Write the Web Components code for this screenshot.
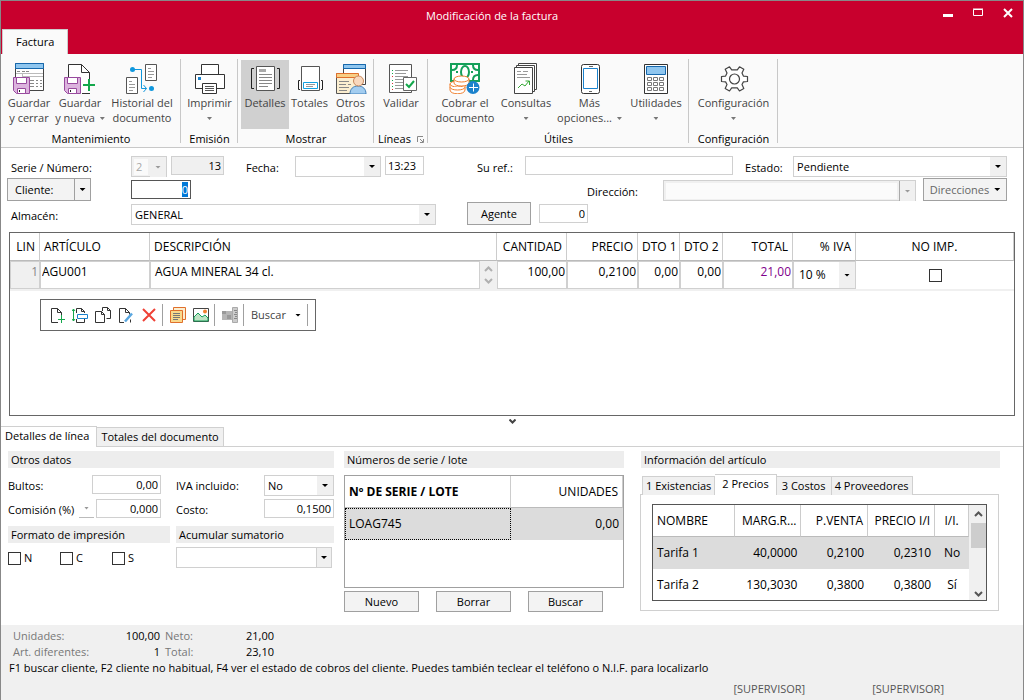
<!DOCTYPE html>
<html lang="es">
<head>
<meta charset="utf-8">
<title>Modificación de la factura</title>
<style>
  html, body { margin: 0; height: 100%; }
  body { font: 11px/16px "Open Sans", "Noto Sans", sans-serif; color: #000; background: #fff; }
</style>
</head>
<body>
<app-window></app-window>

<script>
const BASE = `
  * { box-sizing: border-box; }
  :host { display: block; box-sizing: border-box; }
  input, select, button, textarea { font: inherit; color: inherit; margin: 0; border-radius: 0; outline: none; }
  svg { display: block; flex: none; }
  button { display: inline-flex; align-items: center; justify-content: center; padding: 0; white-space: nowrap;
    height: 23px; border: 1px solid #a0a0a0; background: #f3f3f3; }
  input[type=text] { height: 19px; min-width: 0; border: 1px solid #d0d0d0; background: #fff; padding: 0 2px; }
  input.num { text-align: right; }
  input[type=checkbox] { appearance: none; width: 13px; height: 13px; border: 1px solid #333; background: #fff; flex: none; }
  .arrow { width: 5px; height: 3px; background: currentColor; clip-path: polygon(0 0, 100% 0, 50% 100%); flex: none; }
  .combo { display: inline-grid; grid-template-columns: 1fr 16px; height: 21px; border: 1px solid #d0d0d0; background: #fff; min-width: 0; }
  .combo select { grid-area: 1 / 1 / 2 / 3; appearance: none; border: 0; background: none; padding: 1px 3px 0; min-width: 0; width: 100%; }
  .combo i { grid-area: 1 / 2; background: #f0f0f0; display: grid; place-items: center; pointer-events: none; }
  .combo i::after { content: ""; width: 6px; height: 3px; background: currentColor; clip-path: polygon(0 0, 100% 0, 50% 100%); }
  .bar { background: #ededed; height: 17px; line-height: 18px; padding: 0 3px; margin: 0; font-weight: normal; font-size: inherit; }
  table { border-collapse: separate; border-spacing: 0; table-layout: fixed; width: 100%; font-size: 12px; }
  th { font-weight: normal; }
  th, td { text-align: left; padding: 0 4px; white-space: nowrap; overflow: hidden; }
  .r { text-align: right; }
  .c { text-align: center; }
`;
function define(name, css, html, ready) {
  const t = document.createElement('template');
  t.innerHTML = `<style>${BASE}${css}</style>${html}`;
  customElements.define(name, class extends HTMLElement {
    constructor() {
      super();
      this.attachShadow({ mode: 'open' }).append(t.content.cloneNode(true));
    }
    connectedCallback() { if (ready) ready(this); }
  });
}

const ICONS = {
  saveClose: `<path d="M2.5 1.5h28v27h-28z" fill="#fff" stroke="#444"/><path d="M2.5 1.5h28v5h-28z" fill="#8fc6ef" stroke="#1668ad"/>
    <path d="M4 9.5h3m2 0h3m1 0h3M17 18.500h4m2 0h2m2 0h2M17 21.500h4m2 0h2m2 0h2M17 24.500h4m2 0h2m2 0h2" stroke="#888"/><path d="M3 11.500h27M9.500 12v4M9 14.500h21" stroke="#bbb"/>
    <path d="M.5 15.500h16v16h-13l-3-3z" fill="#dcb3de" stroke="#984a9e"/><path d="M3.500 15.500h10v6h-10zM4.500 26.500h8v5h-8z" fill="#fff" stroke="#984a9e"/><path d="M6.500 28v2" stroke="#222"/>`,
  saveNew: `<path d="M4.500 31V2.500h13l8 8V31" fill="#fff"/><path d="M4.500 15V2.500h13l8 8V18M17.500 2.500v8h8M18 31.500h8" fill="none" stroke="#333"/>
    <path d="M.5 15.500h16v16h-13l-3-3z" fill="#dcb3de" stroke="#984a9e"/><path d="M3.500 15.500h10v6h-10zM4.500 26.500h8v5h-8z" fill="#fff" stroke="#984a9e"/><path d="M6.500 28v2" stroke="#222"/>
    <path d="M25 17v12M19 23h12" stroke="#14a84c" stroke-width="2"/>`,
  history: `<g fill="#fff" stroke="#555"><path d="M19.500 2.500h11v16h-11zM.5 15.500h11v16H.5z"/></g>
    <path d="M22 6.500h3M22 9.500h6M22 12.500h6M22 15.500h4M3 19.500h3M3 22.500h6M3 25.500h6M3 28.500h4" stroke="#999"/>
    <path d="M6 7.500h9.500v19h5" fill="none" stroke="#0f97dd"/><path d="M17.500 23l3 3.500-3 3.500" fill="none" stroke="#0f97dd"/><circle cx="6.500" cy="7.500" r="2.500" fill="#0f97dd"/><circle cx="25.500" cy="26.500" r="2.500" fill="#0f97dd"/>`,
  print: `<path d="M7.500 12V2.500h17V12" fill="#fff" stroke="#333"/><path d="M1.500 12.500h29v14h-29z" fill="#fff" stroke="#333"/>
    <path d="M8.500 21.500h14v10h-14z" fill="#fff" stroke="#333"/><path d="M11 24.500h9M11 26.500h9M11 28.500h9" stroke="#555"/><path d="M4 15h3v3H4z" fill="#1b82cc"/>`,
  details: `<path d="M7.500 4.500h18v24h-18z" fill="#fff" stroke="#555"/><path d="M10 7h7v3h-7z" fill="#aaa"/>
    <path d="M10 12.500h13M10 15.500h13M10 18.500h13M10 21.500h13M10 24.500h9" stroke="#888"/><path d="M5 6.500H2.500v20H5M28 6.500h2.500v20H28" fill="none" stroke="#222"/>`,
  totals: `<path d="M7.500 4.500h18v24h-18z" fill="#fff" stroke="#555"/><path d="M9.500 20.500h14v6h-14z" fill="#fff" stroke="#12a0e0"/><path d="M12 22.500h9M12 24.500h7" stroke="#999"/>
    <path d="M6 18.500H4.500v9H6M27 18.500h1.500v9H27" fill="none" stroke="#222"/>`,
  other: `<path d="M8.500 2.500h22v20h-22z" fill="#fff" stroke="#444"/><path d="M8.500 2.500h22v4h-22z" fill="#8fc6ef" stroke="#1668ad"/>
    <path d="M1.500 11.500h21v20h-21z" fill="#fbeed0" stroke="#555"/><path d="M1.500 11.500h22v4h-22z" fill="#f8cf85" stroke="#e0702c"/>
    <path d="M4 19.500h10M4 22.500h7m2 0h3M4 25.500h10M4 28.500h8" stroke="#888"/>
    <path d="M15 32c0-5 3-8 8-8s8 3 8 8z" fill="#a3cdf0" stroke="#3f7fb8"/><circle cx="23.500" cy="19" r="5" fill="#f9d8bd" stroke="#c9885c"/>`,
  check: `<path d="M4.500 2.500h22v28h-22z" fill="#fff" stroke="#555"/><path d="M10 8.500h13M10 11.500h11M10 14.500h13M10 17.500h8M10 20.500h8M10 23.500h8M10 26.500h8" stroke="#999"/>
    <path d="M7.500 8v1m0 2v1m0 6v1m0 5v1" stroke="#14a84c"/><path d="M7.500 14v1m0 6v1m0 5v1" stroke="#d33"/><path d="M18.500 15.500h13v13h-13z" fill="#fff" stroke="#666"/><path d="M21 22l3 3 5-6" fill="none" stroke="#14a84c" stroke-width="2"/>`,
  cash: `<path d="M2 2h28v17H2z" fill="#fff" stroke="#14a05a" stroke-width="2"/><path d="M3 8c3 0 5-2 5-5m16 0c0 3 2 5 5 5M24 18c0-3 2-5 5-5" fill="none" stroke="#14a05a" stroke-width="2"/>
    <ellipse cx="16" cy="10" rx="4" ry="6" fill="#fff" stroke="#14a05a" stroke-width="2"/><path d="M7 10h2m13 0h2" stroke="#14a05a" stroke-width="2"/>
    <g fill="#fff" stroke="#f08030"><path d="M1 22v6c0 5 15 5 15 0v-6z"/><ellipse cx="8.500" cy="22" rx="7.500" ry="3"/><path d="M1 25c0 4 15 4 15 0"/><path d="M5 17v4c0 4 15 4 15 0v-4z"/><ellipse cx="12.500" cy="17" rx="7.500" ry="3"/></g>
    <circle cx="24" cy="25.500" r="6.500" fill="#1b82cc"/><path d="M24.500 21.500v8M20 25.500h9" stroke="#fff"/>`,
  reports: `<g fill="#fff" stroke="#444"><path d="M8.500 1.500h18v26h-18z"/><path d="M6.500 3.500h18v26h-18z"/><path d="M4.500 5.500h18v26h-18z"/></g>
    <path d="M7 9.500h4m2 0h5M7 12.500h10M7 15.500h13" stroke="#999"/><path d="M8 26l4-4 3 2 4-5m-3.500 0h4v4" fill="none" stroke="#35a835"/>`,
  phone: `<rect x="7.500" y="2.500" width="18" height="29" rx="2" fill="#fff" stroke="#333"/><path d="M9.500 6.500h14v20h-14z" fill="#fff" stroke="#1b82cc"/><path d="M15 4.500h4M15 29.500h3" stroke="#666"/>`,
  calc: `<path d="M4.500 2.500h23v29h-23z" fill="#fff" stroke="#333"/><path d="M6.500 4.500h19v8h-19z" fill="#8fc6ef" stroke="#1668ad"/>
    <path d="M7.500 15.500h4v3h-4zm6 0h4v3h-4zm6 0h4v3h-4zm-12 5h4v3h-4zm6 0h4v3h-4zm6 0h4v3h-4zm-12 5h4v3h-4zm6 0h4v3h-4zm6 0h4v3h-4z" fill="#fff" stroke="#777"/>`,
  gear: `<path d="M29.500 19.500L29.500 14.500L25.400 14.100L24 11L25.800 7.300L21.500 4.800L19.300 7.900H13.700L11.500 4.800L7.200 7.300L9 11L7.600 14.100L3.500 14.500V19.500L7.600 19.900L9 22.500L7.200 26.500L11.500 29L13.700 25.900H19.300L21.500 29L25.800 26.500L24 22.500L25.400 19.900Z" fill="#fff" stroke="#444" stroke-width="1.200" stroke-linejoin="round"/><circle cx="16.500" cy="17" r="5" fill="none" stroke="#444" stroke-width="1.200"/>`
};
const TOOLS = {
  'Nueva línea': `<path d="M9 15.500H2.500v-14h6l4 4v3M8.500 1.500v4h4" fill="none" stroke="#333"/><path d="M12.500 8v8M9 12.500h7" stroke="#14a84c"/>`,
  'Insertar línea': `<path d="M4.500 6V1.500h5l3 3V6M9.500 1.500v3h3M4.500 12v3.500h8V12" fill="none" stroke="#333"/><path d="M5.500 7.500h10v4h-10z" fill="#fff" stroke="#1b82cc"/><path d="M1.500 2v12M0 4l1.500-2L3 4M0 12l1.500 2L3 12" fill="none" stroke="#14a84c"/>`,
  'Duplicar línea': `<path d="M7.500 4V.5h5l3 3v8h-4M12.500.5v3h3" fill="none" stroke="#333"/><path d="M.5 4.500h6l3 3v8h-9zM6.500 4.500v3h3" fill="#fff" stroke="#333"/>`,
  'Editar línea': `<path d="M6 15.500H1.500v-14h6l4 4v2M7.500 1.500v4h4M12.500 15.500v-3" fill="none" stroke="#333"/><path d="M7 14.500l7-8" stroke="#5aa7e0" stroke-width="2.500"/>`,
  'Borrar línea': `<path d="M2 2l12 12M14 2L2 14" stroke="#ef4136" stroke-width="2"/>`,
  'Notas': `<path d="M3.500.5h12v12h-12z" fill="#fbeed0" stroke="#e0702c"/><path d="M.5 3.500h12v12H.5z" fill="#f9d98c" stroke="#e0702c"/><path d="M3 6.500h7M3 8.500h7M3 10.500h7M3 12.500h5" stroke="#777"/>`,
  'Imagen': `<path d="M.5 1.500h15v13H.5z" fill="#fff" stroke="#444"/><path d="M1 10l4-4 4 4 3-2 3 3v3H1z" fill="#bfe3c4" stroke="#14a05a"/><circle cx="12" cy="4.500" r="2" fill="#f08030"/>`,
  'Tallas y colores': `<path d="M0 4h10v9H0z" fill="#b5b5b5"/><path d="M0 4h4v3H0zm5 4h4v4H5z" fill="#999"/><path d="M10.500.500h5v15h-5z" fill="#ccc" stroke="#aaa"/><path d="M12 3.500h3M13 5.500h2M12 7.500h3M13 9.500h2M12 11.500h3" stroke="#888"/>`
};
const tool = n => `<button type="button" aria-label="${n}"><svg width="16" height="16" viewBox="0 0 16 16">${TOOLS[n]}</svg></button>`;

define('title-bar', `
  :host { background: #c8002d; color: #fff; }
  .top { display: grid; grid-template-columns: 1fr auto; height: 28px; }
  h1 { margin: 0; padding-left: 50px; text-align: center; font: inherit; line-height: 30px; }
  nav { display: flex; }
  nav button { width: 30px; height: 24px; border: 0; background: none; }
  .tab { height: 25px; padding: 0 13px; margin-left: 1px; background: #fafafa; color: #000; border: 1px solid #ccc; border-bottom: 0; }
  .tabs { height: 25px; display: flex; }
`, `<div class="top"><h1>Modificación de la factura</h1>
  <nav><button type="button" aria-label="Minimizar"><svg width="10" height="10"><path d="M0 6h10v3H0z" fill="#fff"/></svg></button>
  <button type="button" aria-label="Maximizar"><svg width="10" height="10"><path d="M.5 1.500h9v6h-9zM0 1h10" fill="none" stroke="#fff"/></svg></button>
  <button type="button" aria-label="Cerrar"><svg width="10" height="10"><path d="M1 1l8 8M9 1L1 9" stroke="#fff" stroke-width="2"/></svg></button></nav></div>
  <div class="tabs"><button type="button" class="tab">Factura</button></div>`);

define('ribbon-group', `
  :host { display: flex; flex-direction: column; padding: 6px 3px 0; position: relative; }
  :host::after { content: ""; position: absolute; right: 0; top: 5px; bottom: 4px; width: 1px; background: #c8c8c8; }
  .items { display: flex; height: 69px; }
  footer { display: flex; justify-content: center; align-items: center; gap: 6px; height: 18px; line-height: 18px; padding-top: 2px; white-space: nowrap; }
`, `<div class="items"><slot></slot></div><footer><span></span><slot name="corner"></slot></footer>`,
  el => { el.shadowRoot.querySelector('span').textContent = el.getAttribute('label'); });

define('ribbon-button', `
  button { display: flex; flex-direction: column; justify-content: flex-start; gap: 1px; width: 100%; height: 69px; padding-top: 2px;
    border: 0; background: none; color: #444; line-height: 15px; }
  :host([active]) button { background: #d0d0d0; }
  .text { text-align: center; white-space: pre; }
  .arrow { display: inline-block; margin-left: 5px; vertical-align: 2px; color: #777; }
  .alone { display: block; margin: 7px auto 0; }
`, `<button type="button"><svg width="32" height="32" viewBox="0 0 32 32"></svg><span class="text"></span></button>`,
  el => {
    const r = el.shadowRoot, [a, b = ''] = el.getAttribute('text').split('|');
    r.querySelector('svg').innerHTML = ICONS[el.getAttribute('icon')];
    const t = r.querySelector('.text');
    t.textContent = b ? a + '\n' + b : a;
    if (el.hasAttribute('menu')) {
      const s = document.createElement('span');
      s.className = 'arrow' + (b ? '' : ' alone');
      t.append(s);
    }
    el.style.width = el.getAttribute('size') + 'px';
  });

define('ribbon-bar', `
  :host { display: flex; height: 94px; background: #fafafa; border-bottom: 1px solid #c8c8c8; }
`, `
  <ribbon-group label="Mantenimiento">
    <ribbon-button size="50" icon="saveClose" text="Guardar|y cerrar"></ribbon-button>
    <ribbon-button size="52" icon="saveNew" text="Guardar|y nueva" menu></ribbon-button>
    <ribbon-button size="72" icon="history" text="Historial del|documento"></ribbon-button>
  </ribbon-group>
  <ribbon-group label="Emisión"><ribbon-button size="51" icon="print" text="Imprimir" menu></ribbon-button></ribbon-group>
  <ribbon-group label="Mostrar">
    <ribbon-button size="48" icon="details" text="Detalles" active></ribbon-button>
    <ribbon-button size="41" icon="totals" text="Totales"></ribbon-button>
    <ribbon-button size="41" icon="other" text="Otros|datos"></ribbon-button>
  </ribbon-group>
  <ribbon-group label="Líneas"><ribbon-button size="48" icon="check" text="Validar"></ribbon-button>
    <svg slot="corner" width="7" height="7"><path d="M.5 6V.5H6M3 3l3 3M6.500 3v3.500H3" fill="none" stroke="#888"/></svg></ribbon-group>
  <ribbon-group label="Útiles">
    <ribbon-button size="68" icon="cash" text="Cobrar el|documento"></ribbon-button>
    <ribbon-button size="54" icon="reports" text="Consultas" menu></ribbon-button>
    <ribbon-button size="73" icon="phone" text="Más|opciones..." menu></ribbon-button>
    <ribbon-button size="60" icon="calc" text="Utilidades" menu></ribbon-button>
  </ribbon-group>
  <ribbon-group label="Configuración"><ribbon-button size="83" icon="gear" text="Configuración" menu></ribbon-button></ribbon-group>`);

define('invoice-head', `
  :host { padding: 6px 16px 0 6px; }
  .row { display: flex; align-items: flex-start; height: 24px; }
  label { line-height: 28px; white-space: nowrap; flex: none; }
  .row > input, .row > .combo { margin-top: 2px; flex: none; }
  .l1 { width: 120px; margin-left: 4px; }
  .off { color: #888; border-color: #d0d0d0; }
  input[type=text].ro { background: #f0f0f0; width: 53px; margin: 2px 22px 0 4px; }
  .combo.off { background: #f0f0f0; }
  .combo.off select { background: #fff; margin: 2px; width: auto; grid-column: 1; padding: 0 2px; }
  .combo.off i { color: #999; }
  .split { display: flex; width: 84px; margin-right: 40px; }
  .split button:first-child { width: 68px; justify-content: flex-start; padding-left: 7px; }
  .split button:last-child { width: 17px; margin-left: -1px; }
  .arrow { width: 6px; height: 3px; }
  #cli { border-color: #555; width: 60px; }
  ::selection { background: #0078d7; color: #fff; }
`, `
  <div class="row">
    <label class="l1" for="serie">Serie / Número:</label>
    <span class="combo off" style="width:36px"><select id="serie" disabled><option>2</option></select><i></i></span>
    <input class="num ro" type="text" value="13" readonly aria-label="Número">
    <label for="fecha" style="width:49px">Fecha:</label>
    <span class="combo" style="width:86px"><select id="fecha"><option></option></select><i></i></span>
    <input type="text" value="13:23" aria-label="Hora" style="width:39px;margin-left:4px">
    <label for="ref" style="width:48px;margin-left:53px">Su ref.:</label>
    <input type="text" id="ref" style="flex:206 1 0">
    <label for="estado" style="width:48px;margin-left:12px">Estado:</label>
    <span class="combo" style="flex:216 1 0"><select id="estado"><option>Pendiente</option></select><i></i></span>
  </div>
  <div class="row">
    <span class="split"><button type="button" id="bcli">Cliente:</button><button type="button" aria-label="Opciones de cliente"><span class="arrow"></span></button></span>
    <input class="num" type="text" id="cli" value="0" aria-labelledby="bcli">
    <span style="flex:1"></span>
    <label for="dir" style="width:76px">Dirección:</label>
    <span class="combo off" style="width:253px"><select id="dir" disabled><option></option></select><i style="border-left:1px solid #aaa"></i></span>
    <button type="button" style="width:84px;gap:5px;margin-left:7px;color:#666">Direcciones<span class="arrow" style="background:#000"></span></button>
  </div>
  <div class="row">
    <label class="l1" for="alm">Almacén:</label>
    <span class="combo" style="width:305px"><select id="alm"><option>GENERAL</option></select><i></i></span>
    <button type="button" id="bag" style="width:64px;margin:0 8px 0 31px">Agente</button>
    <input class="num" type="text" value="0" aria-labelledby="bag" style="width:49px">
  </div>`,
  el => { const i = el.shadowRoot.getElementById('cli'); i.focus(); i.select(); });

define('line-toolbar', `
  :host { display: inline-flex; align-items: center; height: 32px; border: 1px solid #666; background: #fff; padding: 0 4px; }
  button { width: 23px; height: 24px; border: 0; background: none; }
  hr { width: 1px; height: 22px; border: 0; background: #a0a0a0; margin: 0 3px 0 2px; }
  .menu { width: 58px; gap: 9px; color: #444; }
  .arrow { width: 6px; height: 3px; background: #000; }
`, `${['Nueva línea', 'Insertar línea', 'Duplicar línea', 'Editar línea', 'Borrar línea'].map(tool).join('')}<hr>${tool('Notas')}${tool('Imagen')}<hr>${tool('Tallas y colores')}<hr><button type="button" class="menu">Buscar<span class="arrow"></span></button><hr>`);

define('invoice-lines', `
  :host { flex: 1 0 auto; display: flex; flex-direction: column; min-height: 184px; margin: 6px 8px 0; border: 1px solid #666; }
  th { height: 28px; border-right: 1px solid #ccc; border-bottom: 1px solid #bbb; }
  td { padding: 0; height: 30px; background: #fff; border-bottom: 2px solid #f0f0f0; vertical-align: top; }
  td > input[type=text], textarea { display: block; width: 100%; height: 28px; border: 1px solid #d0d0d0; padding: 0 1px 8px; }
  td.lin { background: #f0f0f0; }
  td.lin input { background: #f0f0f0; color: #888; }
  .desc { display: flex; background: #f0f0f0; }
  .desc textarea { flex: 1; resize: none; overflow: hidden; line-height: 17px; padding: 1px 4px; width: auto; }
  .spin { width: 17px; display: grid; place-content: center; gap: 6px; }
  .combo { display: grid; height: 28px; }
  .combo select { padding: 0 5px; }
  td.c { vertical-align: middle; line-height: 0; }
  line-toolbar { align-self: flex-start; margin: 8px 0 0 30px; }
`, `
  <table>
    <colgroup><col style="width:30px"><col style="width:110px"><col><col style="width:70px"><col style="width:71px"><col style="width:42px"><col style="width:43px"><col style="width:70px"><col style="width:63px"><col style="width:158px"></colgroup>
    <thead><tr><th class="r">LIN</th><th>ARTÍCULO</th><th>DESCRIPCIÓN</th><th class="r">CANTIDAD</th><th class="r">PRECIO</th><th class="r">DTO 1</th><th class="r">DTO 2</th><th class="r">TOTAL</th><th class="r">% IVA</th><th class="c">NO IMP.</th></tr></thead>
    <tbody><tr>
      <td class="lin"><input class="num" type="text" value="1" readonly aria-label="Línea"></td>
      <td><input type="text" value="AGU001" aria-label="Artículo"></td>
      <td><div class="desc"><textarea aria-label="Descripción">AGUA MINERAL 34 cl.</textarea><span class="spin"><svg width="9" height="6"><path d="M1 5l3.500-3.500L8 5" fill="none" stroke="#b0b0b0" stroke-width="2"/></svg><svg width="9" height="6"><path d="M1 1l3.500 3.500L8 1" fill="none" stroke="#b0b0b0" stroke-width="2"/></svg></span></div></td>
      <td><input class="num" type="text" value="100,00" aria-label="Cantidad"></td>
      <td><input class="num" type="text" value="0,2100" aria-label="Precio"></td>
      <td><input class="num" type="text" value="0,00" aria-label="Descuento 1"></td>
      <td><input class="num" type="text" value="0,00" aria-label="Descuento 2"></td>
      <td><input class="num" type="text" value="21,00" aria-label="Total" style="color:#80008c"></td>
      <td><span class="combo"><select aria-label="IVA"><option>10 %</option></select><i></i></span></td>
      <td class="c"><input type="checkbox" aria-label="No imprimir"></td>
    </tr></tbody>
  </table>
  <line-toolbar></line-toolbar>`);

define('detail-tabs', `
  .grip { display: grid; place-items: center; height: 10px; }
  .tabs { display: flex; align-items: flex-end; height: 21px; border-bottom: 1px solid #d0d0d0; }
  .tabs button { height: 19px; border-color: #d0d0d0; border-width: 1px 1px 0 0; background: #f0f0f0; padding: 0 4px; }
  .tabs .on { height: 21px; background: #fff; margin-bottom: -1px; padding: 0 7px 2px 4px; }
  .panels { display: grid; grid-template-columns: 326fr 290fr 376fr; padding: 4px 23px 0 7px; }
`, `
  <div class="grip"><svg width="7" height="5"><path d="M.5.5l3 3 3-3" fill="none" stroke="#444" stroke-width="2"/></svg></div>
  <div class="tabs"><button type="button" class="on">Detalles de línea</button><button type="button">Totales del documento</button></div>
  <div class="panels"><line-data></line-data><serial-panel></serial-panel><article-panel></article-panel></div>`);

define('line-data', `
  .form { display: grid; grid-template-columns: 71px 13px 69px 15px 88px 1fr; grid-auto-rows: 24px; padding-top: 7px; align-items: start; }
  label { white-space: nowrap; line-height: 22px; }
  .a { grid-column: 1; } .b { grid-column: 3; } .d { grid-column: 5; } .e { grid-column: 6; }
  .pick { grid-column: 2; height: 19px; width: 15px; border: 0; border-bottom: 1px solid #bbb; background: none; color: #999; }
  #com { margin-left: 4px; }
  .two { display: grid; grid-template-columns: 162fr 158fr; gap: 4px 6px; padding-top: 3px; }
  .checks { display: flex; }
  .checks label { display: flex; align-items: center; gap: 3px; width: 52px; }
  .two .combo { width: 156px; grid-template-columns: 1fr 15px; }
  .two .combo i { border-left: 1px solid #d0d0d0; }
`, `
  <h2 class="bar">Otros datos</h2>
  <div class="form">
    <label class="a" for="bul">Bultos:</label><input class="num b" type="text" id="bul" value="0,00">
    <label class="d" for="iva">IVA incluido:</label><span class="combo e"><select id="iva"><option>No</option></select><i></i></span>
    <label class="a" for="com">Comisión (%)</label><button class="pick" type="button" aria-label="Tipo de comisión"><span class="arrow"></span></button><input class="num b" type="text" id="com" value="0,000">
    <label class="d" for="cos">Costo:</label><input class="num e" type="text" id="cos" value="0,1500">
  </div>
  <div class="two">
    <h2 class="bar">Formato de impresión</h2><h2 class="bar">Acumular sumatorio</h2>
    <div class="checks"><label><input type="checkbox">N</label><label><input type="checkbox">C</label><label><input type="checkbox">S</label></div>
    <span class="combo"><select aria-label="Acumular sumatorio"><option></option></select><i></i></span>
  </div>`);

define('serial-panel', `
  :host { margin-left: 10px; }
  .box { margin-top: 7px; border: 1px solid #a0a0a0; height: 113px; }
  th { height: 32px; border-bottom: 1px solid #bbb; border-right: 1px solid #ccc; font-weight: normal; }
  th:first-child { font-weight: bold; }
  td { height: 32px; background: #dcdcdc; }
  td:first-child { outline: 1px dotted #000; outline-offset: -1px; }
  .btns { display: flex; gap: 17px; margin-top: 3px; }
  .btns button { width: 75px; height: 21px; }
`, `
  <h2 class="bar">Números de serie / lote</h2>
  <div class="box"><table><colgroup><col><col style="width:112px"></colgroup>
    <thead><tr><th>Nº DE SERIE / LOTE</th><th class="r">UNIDADES</th></tr></thead>
    <tbody><tr><td>LOAG745</td><td class="r">0,00</td></tr></tbody></table></div>
  <div class="btns"><button type="button">Nuevo</button><button type="button">Borrar</button><button type="button">Buscar</button></div>`);

define('article-panel', `
  :host { margin-left: 16px; }
  .bar { margin-left: 1px; }
  .tabs { display: flex; align-items: flex-end; height: 21px; margin: 6px 0 -1px 2px; position: relative; }
  .tabs button { height: 19px; border-color: #d0d0d0; border-width: 1px 1px 0 0; background: #f0f0f0; padding: 0 3px; min-width: 55px; }
  .tabs button:first-child { border-left-width: 1px; }
  .tabs .on { height: 21px; background: #fff; padding: 0 7px 2px; }
  .pane { border: 1px solid #d0d0d0; padding: 9px 11px; margin-right: 1px; }
  .box { border: 1px solid #555; display: flex; height: 97px; overflow: hidden; }
  table { flex: 1; width: auto; }
  th { height: 32px; border-right: 1px solid #ccc; border-bottom: 1px solid #bbb; }
  td { height: 32px; }
  .sel td { background: #dcdcdc; }
  .scroll { flex: none; width: 17px; background: #f0f0f0; display: flex; flex-direction: column; align-items: center; padding: 6px 0 3px 1px; }
  .thumb { width: 15px; height: 25px; margin: 6px 0 auto; background: #cdcdcd; }
`, `
  <h2 class="bar">Información del artículo</h2>
  <div class="tabs"><button type="button">1 Existencias</button><button type="button" class="on">2 Precios</button><button type="button">3 Costos</button><button type="button">4 Proveedores</button></div>
  <div class="pane"><div class="box">
    <table><colgroup><col style="width:82px"><col style="width:67px"><col style="width:67px"><col style="width:67px"><col style="width:34px"></colgroup>
      <thead><tr><th>NOMBRE</th><th class="r">MARG.R...</th><th class="r">P.VENTA</th><th class="r">PRECIO I/I</th><th class="c">I/I.</th></tr></thead>
      <tbody><tr class="sel"><td>Tarifa 1</td><td class="r">40,0000</td><td class="r">0,2100</td><td class="r">0,2310</td><td class="c">No</td></tr>
      <tr><td>Tarifa 2</td><td class="r">130,3030</td><td class="r">0,3800</td><td class="r">0,3800</td><td class="c">Sí</td></tr></tbody></table>
    <div class="scroll"><svg width="9" height="6"><path d="M1 5l3.500-3.500L8 5" fill="none" stroke="#555" stroke-width="2"/></svg><div class="thumb"></div><svg width="9" height="6"><path d="M1 1l3.500 3.500L8 1" fill="none" stroke="#555" stroke-width="2"/></svg></div>
  </div></div>`);

define('status-bar', `
  :host { background: #f0f0f0; height: 75px; margin-top: 13px; padding: 3px 0 0 8px; }
  b { font-weight: normal; }
  .sums { display: grid; grid-template-columns: 100px 47px 50px 64px; padding-left: 4px; }
  .sums span { color: #777; }
  .sums span:nth-of-type(even) { padding-left: 5px; }
  .users { display: flex; justify-content: flex-end; gap: 67px; padding: 5px 79px 0 0; color: #555; }
`, `
  <div class="sums"><span>Unidades:</span><b class="r">100,00</b><span>Neto:</span><b class="r">21,00</b>
  <span>Art. diferentes:</span><b class="r">1</b><span>Total:</span><b class="r">23,10</b></div>
  <div>F1 buscar cliente, F2 cliente no habitual, F4 ver el estado de cobros del cliente. Puedes también teclear el teléfono o N.I.F. para localizarlo</div>
  <div class="users"><span>[SUPERVISOR]</span><span>[SUPERVISOR]</span></div>`);

define('app-window', `
  :host { display: flex; flex-direction: column; min-height: 100vh; min-width: 1000px; border: 1px solid #888; background: #fff; }
`, `<title-bar></title-bar><ribbon-bar></ribbon-bar><invoice-head></invoice-head><invoice-lines></invoice-lines><detail-tabs></detail-tabs><status-bar></status-bar>`);
</script>
</body>
</html>
